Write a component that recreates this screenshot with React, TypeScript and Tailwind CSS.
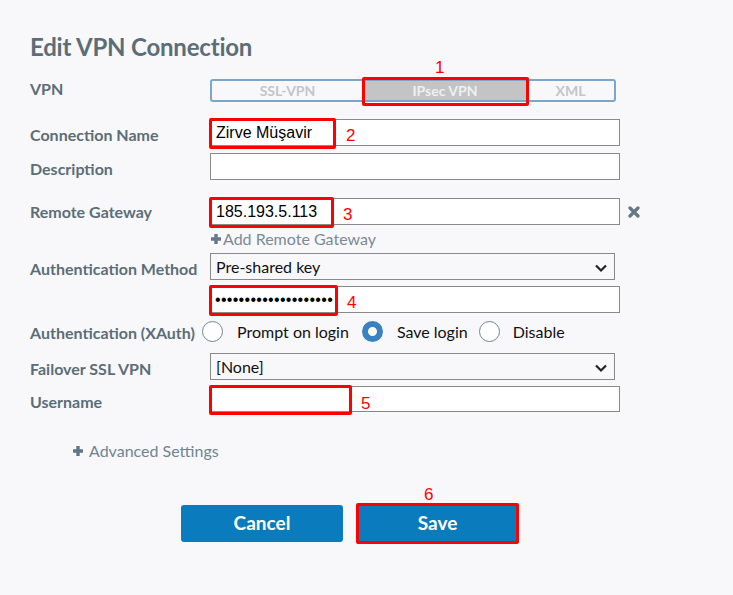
import React from "react";

const Label = ({ children, className = "pt-[4px]" }: { children: React.ReactNode; className?: string }) => (
  <div className={`w-[180px] shrink-0 text-[16px] font-bold text-[#5b6e78] ${className}`}>{children}</div>
);

const Mark = ({ n, className }: { n: string; className: string }) => (
  <span className={`absolute font-['Liberation_Sans',sans-serif] text-[17px] font-normal leading-none text-[#f00] ${className}`}>
    {n}
  </span>
);

const Radio = ({ on }: { on?: boolean }) =>
  on ? (
    <span className="box-border h-[21px] w-[21px] rounded-full border-[6px] border-[#3a82bf] bg-white" />
  ) : (
    <span className="box-border h-[21px] w-[21px] rounded-full border border-[#6f8590] bg-white" />
  );

const Chevron = () => (
  <svg width="14" height="10" viewBox="0 0 14 10" className="absolute right-[6px] top-[9px]">
    <path d="M2 2.5 L7 7.5 L12 2.5" fill="none" stroke="#222" strokeWidth="2.2" />
  </svg>
);

const Plus = ({ color }: { color: string }) => (
  <svg width="12" height="12" viewBox="0 0 12 12">
    <path d="M6 1 V11 M1 6 H11" stroke={color} strokeWidth="3.4" />
  </svg>
);

export default function App() {
  return (
    <div className="h-[595px] w-[733px] bg-[#f8f8fb] pl-[30px] pt-[33px] font-['Lato',sans-serif]">
      <h1 className="text-[24px] font-bold leading-[28px] tracking-[-0.2px] text-[#5b6e78]">Edit VPN Connection</h1>

      {/* VPN type */}
      <div className="mt-[18px] flex h-[23px] items-center">
        <Label className="pb-[4px]">VPN</Label>
        <div className="relative flex h-[23px] w-[406px] rounded-[3px] border-2 border-[#7aa7c9] text-[14px] font-bold text-[#c3c6c9]">
          <div className="flex w-[151px] items-center justify-center">SSL-VPN</div>
          <div className="flex w-[164px] items-center justify-center bg-[#c4c4c4] text-[#eef0f2]">IPsec VPN</div>
          <div className="flex flex-1 items-center justify-center">XML</div>
          <div className="absolute left-[150px] top-[-4px] h-[29px] w-[167px] rounded-[2px] border-[3px] border-[#f00]" />
          <Mark n="1" className="left-[223px] top-[-22px]" />
        </div>
      </div>

      {/* Connection Name */}
      <div className="mt-[17px] flex h-[27px] items-center">
        <Label>Connection Name</Label>
        <div className="relative flex h-[27px] w-[410px] items-center border border-[#8a8a8a] bg-white pl-[5px] font-['Liberation_Sans',sans-serif] text-[16px] text-black">
          Zirve Müşavir
          <div className="absolute left-[-2px] top-[-2px] h-[31px] w-[127px] rounded-[2px] border-[3px] border-[#f00]" />
          <Mark n="2" className="left-[135px] top-[7px]" />
        </div>
      </div>

      {/* Description */}
      <div className="mt-[7px] flex h-[27px] items-center">
        <Label>Description</Label>
        <div className="h-[27px] w-[410px] border border-[#8a8a8a] bg-white" />
      </div>

      {/* Remote Gateway */}
      <div className="mt-[18px] flex h-[27px] items-center">
        <Label className="pt-[1px]">Remote Gateway</Label>
        <div className="relative flex h-[27px] w-[410px] items-center border border-[#8a8a8a] bg-white pl-[5px] font-['Liberation_Sans',sans-serif] text-[16px] text-black">
          185.193.5.113
          <div className="absolute left-[-2px] top-[-2px] h-[31px] w-[125px] rounded-[2px] border-[3px] border-[#f00]" />
          <Mark n="3" className="left-[132px] top-[7px]" />
        </div>
        <svg width="12" height="12" viewBox="0 0 12 12" className="ml-[8px]">
          <path d="M2 2 L10 10 M10 2 L2 10" stroke="#637884" strokeWidth="3.2" strokeLinecap="round" />
        </svg>
      </div>
      <div className="mt-[4px] flex h-[20px] items-center pl-[180px] text-[16px] text-[#7b8a93]">
        <Plus color="#66798a" />
        <span className="ml-[1px]">Add Remote Gateway</span>
      </div>

      {/* Authentication Method */}
      <div className="mt-[4px] flex h-[27px] items-center">
        <Label>Authentication Method</Label>
        <div className="relative flex h-[27px] w-[405px] items-center border border-[#8a8a8a] bg-[#f8f8fb] pl-[5px] text-[16px] text-[#111]">
          Pre-shared key
          <Chevron />
        </div>
      </div>

      {/* Pre-shared key */}
      <div className="mt-[6px] flex h-[27px] items-center">
        <div className="w-[180px] shrink-0" />
        <div className="relative flex h-[27px] w-[410px] items-center border border-[#8a8a8a] bg-white pl-[4px] font-['Liberation_Sans',sans-serif] text-[16px] tracking-[0.3px] text-black">
          ••••••••••••••••••••
          <div className="absolute left-[-2px] top-[-2px] h-[31px] w-[129px] rounded-[2px] border-[3px] border-[#f00]" />
          <Mark n="4" className="left-[136px] top-[7px]" />
        </div>
      </div>

      {/* XAuth */}
      <div className="mt-[7px] flex h-[23px] items-center">
        <div className="w-[172px] shrink-0 pt-[2px] text-[16px] font-bold text-[#5b6e78]">Authentication (XAuth)</div>
        <div className="flex items-center text-[16px] text-[#111]">
          <Radio />
          <span className="ml-[14px] mr-[13px]">Prompt on login</span>
          <Radio on />
          <span className="ml-[14px] mr-[11px]">Save login</span>
          <Radio />
          <span className="ml-[13px]">Disable</span>
        </div>
      </div>

      {/* Failover SSL VPN */}
      <div className="mt-[10px] flex h-[27px] items-center">
        <Label>Failover SSL VPN</Label>
        <div className="relative flex h-[27px] w-[405px] items-center border border-[#8a8a8a] bg-[#f8f8fb] pl-[5px] text-[16px] text-[#111]">
          [None]
          <Chevron />
        </div>
      </div>

      {/* Username */}
      <div className="mt-[6px] flex h-[26px] items-center">
        <Label className="pt-[6px]">Username</Label>
        <div className="relative h-[26px] w-[410px] border border-[#8a8a8a] bg-white">
          <div className="absolute left-[-2px] top-[-2px] h-[30px] w-[143px] rounded-[2px] border-[3px] border-[#f00]" />
          <Mark n="5" className="left-[150px] top-[8px]" />
        </div>
      </div>

      {/* Advanced Settings */}
      <div className="mt-[29px] flex h-[20px] items-center pl-[42px] text-[16px] text-[#6f8591]">
        <Plus color="#5f7785" />
        <span className="ml-[5px]">Advanced Settings</span>
      </div>

      {/* Buttons */}
      <div className="mt-[42px] flex items-center pl-[151px]">
        <button className="h-[37px] w-[162px] rounded-[3px] bg-[#0a7bbd] text-[19px] font-bold text-white">Cancel</button>
        <div className="relative ml-[13px]">
          <button className="box-border h-[41px] w-[163px] rounded-[2px] border-[3px] border-[#f00] bg-[#0a7bbd] text-[19px] font-bold text-white">
            Save
          </button>
          <Mark n="6" className="left-[68px] top-[-17px]" />
        </div>
      </div>
    </div>
  );
}
